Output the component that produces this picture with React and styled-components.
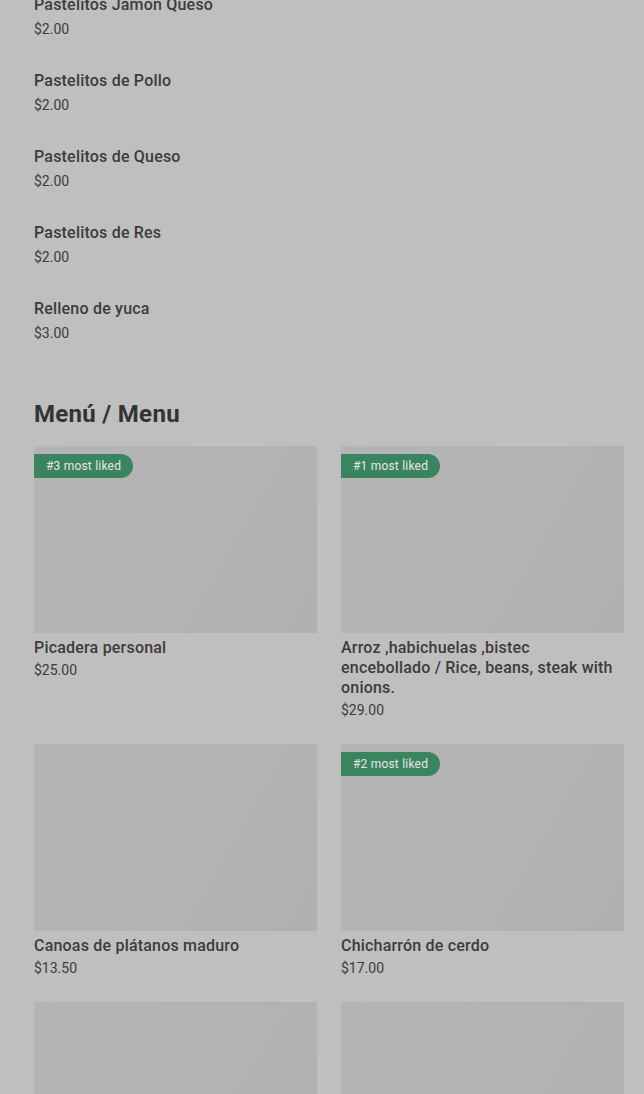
import React from 'react';
import styled, { createGlobalStyle } from 'styled-components';

const GlobalStyle = createGlobalStyle`
  html, body {
    margin: 0;
    padding: 0;
    background: #bfbfbf;
    overflow: hidden;
  }
  body {
    font-family: Roboto, "Liberation Sans", sans-serif;
    color: #3a3a3a;
  }
`;

const Page = styled.main`
  padding: 0 20px 0 34px;
  margin-top: -5px;
`;

const List = styled.ul`
  list-style: none;
  margin: 0;
  padding: 0;
  display: flex;
  flex-direction: column;
  gap: 32px;
`;

const ListItem = styled.li`
  display: flex;
  flex-direction: column;
  gap: 4px;
`;

const Name = styled.div`
  font-size: 16px;
  line-height: 20px;
  font-weight: 500;
  letter-spacing: 0.2px;
  color: #3c3c3c;
`;

const CardTitle = styled(Name)`
  padding-right: 6px;
`;

const Price = styled.div`
  font-size: 14px;
  line-height: 20px;
  color: #3c3c3c;
  margin-top: ${p => p.$top || 0}px;
`;

const Heading = styled.h2`
  margin: 55px 0 16px;
  font-size: 24px;
  line-height: 32px;
  font-weight: 700;
  letter-spacing: 0.3px;
  color: #333;
`;

const Grid = styled.div`
  display: grid;
  grid-template-columns: repeat(2, 1fr);
  column-gap: 24px;
  row-gap: 24px;
`;

const Card = styled.article`
  display: flex;
  flex-direction: column;
`;

const Thumb = styled.div`
  position: relative;
  height: 187px;
  margin-bottom: 5px;
  background: linear-gradient(120deg, #b5b5b5 0%, #b3b3b3 55%, #b0b0b0 100%);
`;

const Badge = styled.span`
  position: absolute;
  top: 8px;
  left: 0;
  height: 24px;
  padding: 0 12px;
  display: flex;
  align-items: center;
  font-size: 12px;
  letter-spacing: 0.2px;
  color: #e6e6e6;
  background: #3b8460;
  border-radius: 0 12px 12px 0;
`;

const items = [
  ['Pastelitos Jamón Queso', '$2.00'],
  ['Pastelitos de Pollo', '$2.00'],
  ['Pastelitos de Queso', '$2.00'],
  ['Pastelitos de Res', '$2.00'],
  ['Relleno de yuca', '$3.00'],
];

const dishes = [
  { title: 'Picadera personal', price: '$25.00', badge: '#3 most liked' },
  { title: 'Arroz ,habichuelas ,bistec encebollado / Rice, beans, steak with onions.', price: '$29.00', badge: '#1 most liked' },
  { title: 'Canoas de plátanos maduro', price: '$13.50' },
  { title: 'Chicharrón de cerdo', price: '$17.00', badge: '#2 most liked' },
  { title: '', price: '' },
  { title: '', price: '' },
];

export default function App() {
  return (
    <>
      <GlobalStyle />
      <Page>
        <List>
          {items.map(([name, price]) => (
            <ListItem key={name}>
              <Name>{name}</Name>
              <Price>{price}</Price>
            </ListItem>
          ))}
        </List>
        <Heading>Menú / Menu</Heading>
        <Grid>
          {dishes.map((d, i) => (
            <Card key={i}>
              <Thumb>{d.badge && <Badge>{d.badge}</Badge>}</Thumb>
              {d.title && <CardTitle>{d.title}</CardTitle>}
              {d.price && <Price $top={2}>{d.price}</Price>}
            </Card>
          ))}
        </Grid>
      </Page>
    </>
  );
}
